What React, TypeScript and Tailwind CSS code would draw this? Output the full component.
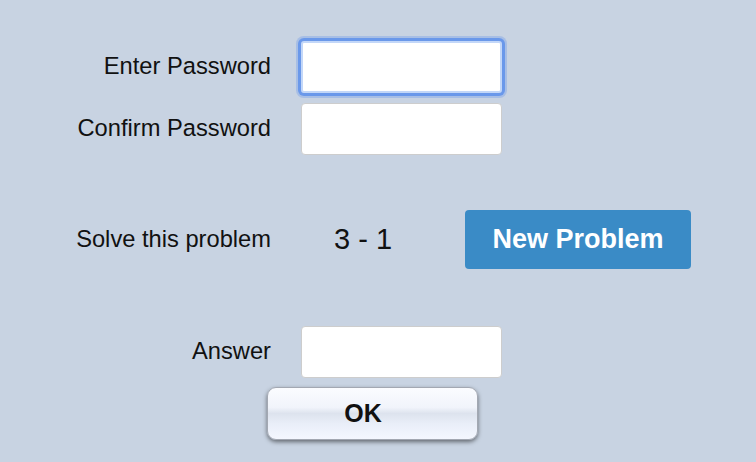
import React from 'react';

const font = { fontFamily: '"Liberation Sans", Arial, sans-serif' };

const Field: React.FC<{ focused?: boolean }> = ({ focused }) => (
  <input
    type="password"
    className={
      focused
        ? 'ml-[30px] w-[201px] h-[52px] bg-white rounded-[3px] border-2 border-[#c3d7f8] outline-none shadow-[0_0_0_3px_#6a98ea,0_0_0_5px_rgba(106,152,234,0.35)]'
        : 'ml-[30px] w-[201px] h-[52px] bg-white rounded-[4px] border border-[#cdcdcd] outline-none'
    }
  />
);

const Label: React.FC<{ children: React.ReactNode }> = ({ children }) => (
  <div className="w-[271px] text-right text-[23.7px] text-[#111]">{children}</div>
);

export default function App() {
  return (
    <div className="w-full h-[462px] bg-[#c8d3e2] pt-[41px] overflow-hidden" style={font}>
      <div className="flex items-center h-[52px]">
        <Label>Enter Password</Label>
        <Field focused />
      </div>
      <div className="flex items-center h-[52px] mt-[10px]">
        <Label>Confirm Password</Label>
        <Field />
      </div>

      <div className="flex items-center h-[59px] mt-[55px]">
        <Label>Solve this problem</Label>
        <div className="ml-[63px] text-[29px] text-[#111]">3 - 1</div>
        <button className="ml-[73px] w-[226px] h-[59px] rounded-[4px] bg-[#3a8bc6] text-white font-bold text-[27px]">
          New Problem
        </button>
      </div>

      <div className="flex items-center h-[52px] mt-[57px]">
        <Label>Answer</Label>
        <input
          type="text"
          className="ml-[30px] w-[201px] h-[52px] bg-white rounded-[4px] border border-[#cdcdcd] outline-none"
        />
      </div>

      <div className="mt-[9px] pl-[267px]">
        <button className="w-[211px] h-[53px] pr-[19px] rounded-[9px] border border-[#a3a8b2] bg-[linear-gradient(to_bottom,#fbfcff_0%,#f1f4fb_38%,#dde3ee_50%,#e9eef8_70%,#f4f7ff_100%)] shadow-[0_2px_4px_rgba(0,0,0,0.5)] text-[25px] font-bold text-[#111]">
          OK
        </button>
      </div>
    </div>
  );
}
